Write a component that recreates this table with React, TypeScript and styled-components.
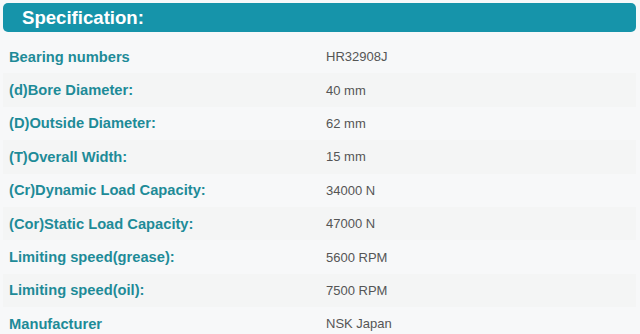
import React, { FC } from 'react';
import styled, { createGlobalStyle } from 'styled-components';

const GlobalStyle = createGlobalStyle`
  html, body {
    margin: 0;
    padding: 0;
    background: #ffffff;
  }
  body {
    font-family: "Liberation Sans", Arial, sans-serif;
  }
`;

const specs: { label: string; value: string }[] = [
  { label: 'Bearing numbers', value: 'HR32908J' },
  { label: '(d)Bore Diameter:', value: '40 mm' },
  { label: '(D)Outside Diameter:', value: '62 mm' },
  { label: '(T)Overall Width:', value: '15 mm' },
  { label: '(Cr)Dynamic Load Capacity:', value: '34000 N' },
  { label: '(Cor)Static Load Capacity:', value: '47000 N' },
  { label: 'Limiting speed(grease):', value: '5600 RPM' },
  { label: 'Limiting speed(oil):', value: '7500 RPM' },
  { label: 'Manufacturer', value: 'NSK Japan' },
];

const Panel = styled.section`
  width: 640px;
  height: 334px;
  overflow: hidden;
  box-sizing: border-box;
  padding: 3px 4px 0 3px;
  background: #f7f8f9;
`;

const Header = styled.h2`
  margin: 0;
  height: 29px;
  border-radius: 5px;
  background: #1694aa;
  color: #ffffff;
  font-size: 18.6px;
  font-weight: bold;
  line-height: 30px;
  padding-left: 19px;
`;

const Table = styled.div`
  margin-top: 8px;
  display: flex;
  flex-direction: column;
`;

const Row = styled.div<{ $shade: boolean }>`
  display: grid;
  grid-template-columns: 317px 1fr;
  align-items: center;
  height: 33.4px;
  padding-left: 6px;
  background: ${(p) => (p.$shade ? '#f4f5f5' : '#f7f8f9')};
`;

const Label = styled.span`
  color: #1e8b98;
  font-size: 14.7px;
  font-weight: bold;
`;

const Value = styled.span`
  color: #555555;
  font-size: 13px;
`;

const App: FC = () => (
  <>
    <GlobalStyle />
    <Panel>
      <Header>Specification:</Header>
      <Table>
        {specs.map((s, i) => (
          <Row key={s.label} $shade={i % 2 === 1}>
            <Label>{s.label}</Label>
            <Value>{s.value}</Value>
          </Row>
        ))}
      </Table>
    </Panel>
  </>
);

export default App;
